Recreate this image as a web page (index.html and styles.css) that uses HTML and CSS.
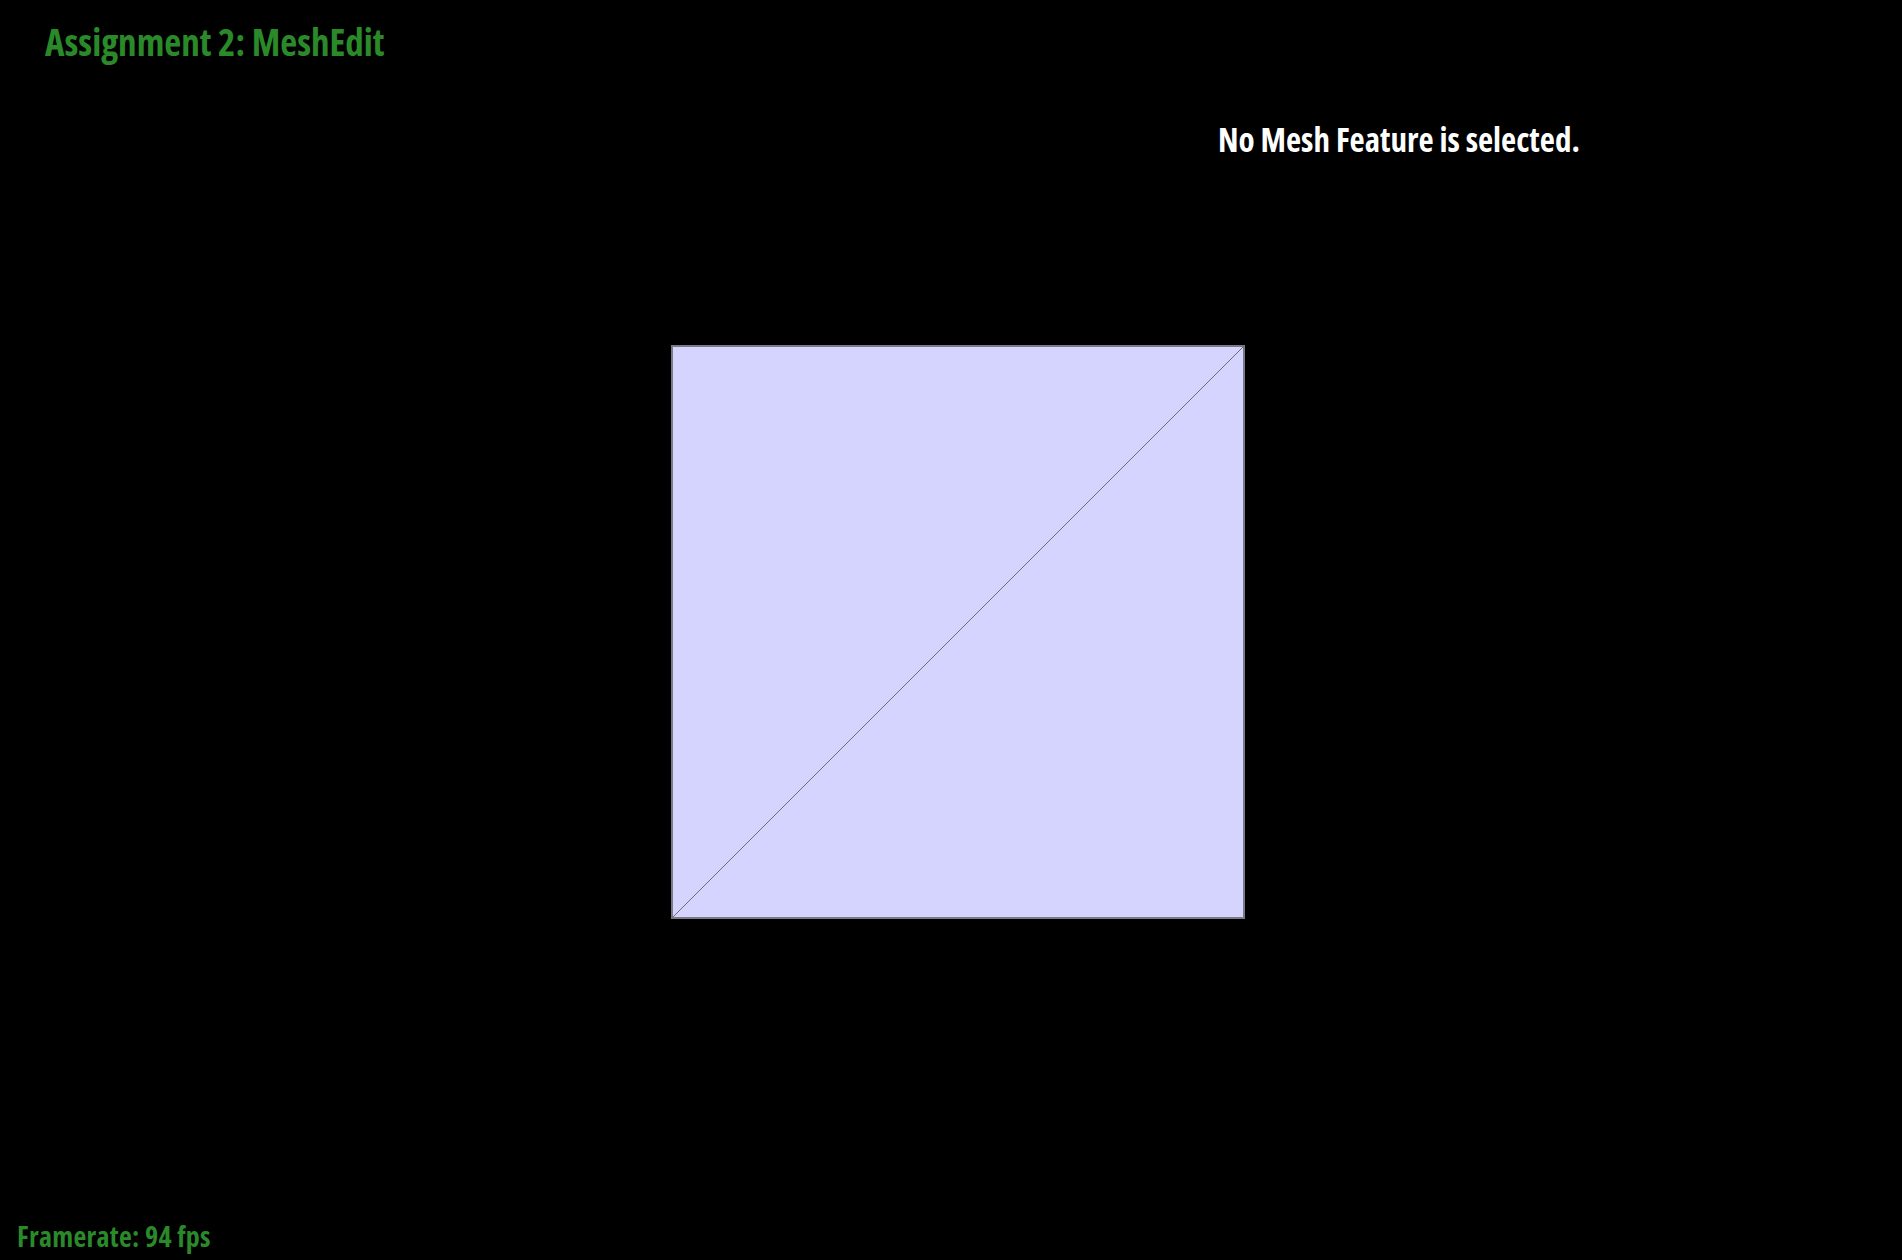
FILE: index.html
```html
<!DOCTYPE html>
<html>
<head>
<meta charset="utf-8">
<link rel="stylesheet" href="styles.css">
</head>
<body>
<div class="app">
  <h1 class="title">Assignment 2: MeshEdit</h1>
  <div class="status">No Mesh Feature is selected.</div>
  <div class="viewport">
    <svg class="mesh" width="574" height="574" viewBox="0 0 574 574">
      <rect x="1" y="1" width="572" height="572" fill="#d4d4ff" stroke="#7a7a86" stroke-width="2"/>
      <line x1="1" y1="573" x2="573" y2="1" stroke="#6e6e78" stroke-width="1"/>
    </svg>
  </div>
  <div class="fps">Framerate: 94 fps</div>
</div>
</body>
</html>
```
FILE: styles.css
```css
html, body {
  margin: 0;
  padding: 0;
  background: #000;
}
.app {
  width: 1902px;
  height: 1260px;
  position: relative;
  font-family: "Open Sans", "DejaVu Sans", sans-serif;
  font-stretch: 75%;
  font-weight: 700;
  overflow: hidden;
}
.title {
  margin: 0;
  padding: 18px 0 0 45px;
  font-size: 37px;
  line-height: 48px;
  color: #2a8a2a;
  font-weight: 700;
}
.status {
  padding: 54px 0 0 1218px;
  font-size: 33px;
  line-height: 40px;
  color: #fff;
}
.viewport {
  padding: 185px 0 0 671px;
}
.mesh {
  display: block;
}
.fps {
  position: absolute;
  left: 17px;
  bottom: 8px;
  font-size: 28px;
  letter-spacing: 0.3px;
  line-height: 32px;
  color: #2a8a2a;
}
```
